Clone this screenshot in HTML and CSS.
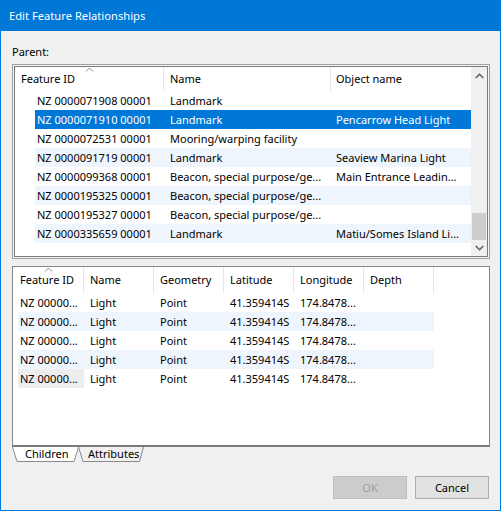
FILE: index.html
```html
<!DOCTYPE html>
<html lang="en">
<head>
  <meta charset="UTF-8">
  <title>Edit Feature Relationships</title>
  <link rel="stylesheet" href="styles.css">
</head>
<body>

  <div class="window">
    <div class="titlebar">Edit Feature Relationships</div>

    <div class="client">
      <div class="label">Parent:</div>

      <div class="parent-box">
        <div class="parent-inner">
          <div class="list">
            <div class="list-header top-cols">
              <div class="hcell">
                <svg class="sort" width="9" height="5" viewBox="0 0 9 5"><polyline points="1,4.5 4.5,1 8,4.5" fill="none" stroke="#8c8c8c" stroke-width="1"/></svg>
                Feature ID
              </div>
              <div class="hcell">Name</div>
              <div class="hcell last">Object name</div>
            </div>
            <div class="rows top-rows">
              <div class="row"><div>NZ 0000071908 00001</div><div>Landmark</div><div></div></div>
              <div class="row selected"><div>NZ 0000071910 00001</div><div>Landmark</div><div>Pencarrow Head Light</div></div>
              <div class="row"><div>NZ 0000072531 00001</div><div>Mooring/warping facility</div><div></div></div>
              <div class="row alt"><div>NZ 0000091719 00001</div><div>Landmark</div><div>Seaview Marina Light</div></div>
              <div class="row"><div>NZ 0000099368 00001</div><div>Beacon, special purpose/ge...</div><div>Main Entrance Leadin...</div></div>
              <div class="row alt"><div>NZ 0000195325 00001</div><div>Beacon, special purpose/ge...</div><div></div></div>
              <div class="row"><div>NZ 0000195327 00001</div><div>Beacon, special purpose/ge...</div><div></div></div>
              <div class="row alt"><div>NZ 0000335659 00001</div><div>Landmark</div><div>Matiu/Somes Island Li...</div></div>
            </div>
          </div>
          <div class="scrollbar">
            <div class="sb-btn">
              <svg width="9" height="6" viewBox="0 0 9 6"><polyline points="0.8,5 4.5,1.3 8.2,5" fill="none" stroke="#606060" stroke-width="1.6"/></svg>
            </div>
            <div class="sb-track"><div class="sb-thumb"></div></div>
            <div class="sb-btn">
              <svg width="9" height="6" viewBox="0 0 9 6"><polyline points="0.8,1 4.5,4.7 8.2,1" fill="none" stroke="#606060" stroke-width="1.6"/></svg>
            </div>
          </div>
        </div>
      </div>

      <div class="child-box">
        <div class="list-header bottom-cols">
          <div class="hcell">
            <svg class="sort" width="9" height="5" viewBox="0 0 9 5"><polyline points="1,4.5 4.5,1 8,4.5" fill="none" stroke="#8c8c8c" stroke-width="1"/></svg>
            Feature ID
          </div>
          <div class="hcell">Name</div>
          <div class="hcell">Geometry</div>
          <div class="hcell">Latitude</div>
          <div class="hcell">Longitude</div>
          <div class="hcell">Depth</div>
        </div>
        <div class="rows bottom-rows">
          <div class="row"><div>NZ 00000...</div><div>Light</div><div>Point</div><div>41.359414S</div><div>174.8478...</div><div></div></div>
          <div class="row alt"><div>NZ 00000...</div><div>Light</div><div>Point</div><div>41.359414S</div><div>174.8478...</div><div></div></div>
          <div class="row"><div>NZ 00000...</div><div>Light</div><div>Point</div><div>41.359414S</div><div>174.8478...</div><div></div></div>
          <div class="row alt"><div>NZ 00000...</div><div>Light</div><div>Point</div><div>41.359414S</div><div>174.8478...</div><div></div></div>
          <div class="row"><div class="focus">NZ 00000...</div><div>Light</div><div>Point</div><div>41.359414S</div><div>174.8478...</div><div></div></div>
        </div>
      </div>

      <div class="tabs">
        <div class="tab tab-children">
          <svg class="tab-shape" width="67" height="15" viewBox="0 0 67 15">
            <polygon points="0,0 67,0 62.5,14.5 4.5,14.5" fill="#ffffff"/>
            <polyline points="0.5,0 5,14.5 62,14.5 66.5,0" fill="none" stroke="#8a8a8a" stroke-width="1"/>
          </svg>
          <span>Children</span>
        </div>
        <div class="tab tab-attributes">
          <svg class="tab-shape" width="66" height="15" viewBox="0 0 66 15">
            <polygon points="0,0 66,0 62,14.5 4.5,14.5" fill="#f0f0f0"/>
            <polyline points="0.5,0 5,14.5 61.5,14.5 65.5,0" fill="none" stroke="#8a8a8a" stroke-width="1"/>
          </svg>
          <span>Attributes</span>
        </div>
      </div>

      <div class="buttons">
        <button class="btn" disabled>OK</button>
        <button class="btn">Cancel</button>
      </div>
    </div>
  </div>

</body>
</html>
```

FILE: styles.css
```css
* {
  box-sizing: border-box;
}
body {
  margin: 0;
  padding: 0;
  background: #f0f0f0;
  font-family: "Noto Sans", sans-serif;
  font-size: 11px;
  color: #000;
}
.window {
  width: 501px;
  height: 511px;
  border: 1px solid #0078d7;
  border-top: none;
  display: flex;
  flex-direction: column;
  background: #f0f0f0;
}
.titlebar {
  height: 31px;
  line-height: 31px;
  margin: 0 -1px;
  padding-left: 9px;
  background: #0078d7;
  color: white;
  font-size: 11.2px;
}
.client {
  flex: 1;
  display: flex;
  flex-direction: column;
  padding: 0 10px 11px 11px;
}
.label {
  margin-top: 13px;
  margin-bottom: 4px;
  height: 16px;
  line-height: 16px;
}

/* parent list */
.parent-box {
  height: 195px;
  border: 1px solid #a0a0a0;
  padding: 1px;
  background: #f7f7f7;
}
.parent-inner {
  height: 100%;
  border: 1px solid #7a7a7a;
  background: white;
  display: flex;
}
.list {
  flex: 1;
  min-width: 0;
  background: white;
}
.list-header {
  display: flex;
  background: white;
}
.hcell {
  position: relative;
  border-right: 1px solid #e5e5e5;
  padding-left: 6px;
  white-space: nowrap;
  overflow: hidden;
}
.hcell.last {
  flex: 1;
  border-right: none;
}
.sort {
  position: absolute;
  top: 0;
  left: 50%;
  margin-left: -4px;
}
.top-cols .hcell {
  height: 24px;
  line-height: 24px;
}
.top-cols .hcell:nth-child(1) {
  width: 149px;
}
.top-cols .hcell:nth-child(2) {
  width: 167px;
}
.top-cols .hcell:nth-child(3) {
  padding-left: 5px;
}
.rows .row {
  display: flex;
  height: 19px;
  line-height: 19px;
}
.rows .row div {
  white-space: nowrap;
  overflow: hidden;
}
.row.alt {
  background: #eff5fc;
}
.row.selected {
  background: #0078d7;
  color: white;
}
.top-rows .row {
  margin-left: 20px;
  width: 436px;
}
.top-rows .row div:nth-child(1) {
  width: 129px;
  padding-left: 2px;
}
.top-rows .row div:nth-child(2) {
  width: 167px;
  padding-left: 6px;
}
.top-rows .row div:nth-child(3) {
  width: 140px;
  padding-left: 5px;
}

.scrollbar {
  width: 16px;
  background: #f0f0f0;
  display: flex;
  flex-direction: column;
}
.sb-btn {
  height: 17px;
  display: flex;
  align-items: center;
  justify-content: center;
}
.sb-btn:last-child {
  height: 16px;
}
.sb-track {
  flex: 1;
  display: flex;
  flex-direction: column;
  justify-content: flex-end;
  padding: 0 1px;
}
.sb-thumb {
  height: 27px;
  background: #cdcdcd;
}

/* children list */
.child-box {
  margin-top: 7px;
  height: 181px;
  border: 1px solid #828790;
  border-bottom: 2px solid #7a7a7a;
  background: white;
}
.bottom-cols .hcell {
  width: 70px;
  height: 26px;
  line-height: 26px;
}
.bottom-cols .hcell:first-child {
  width: 71px;
  padding-left: 7px;
}
.bottom-rows .row {
  margin-left: 5px;
  width: 416px;
}
.bottom-rows .row div {
  width: 70px;
  padding-left: 6px;
}
.bottom-rows .row div:first-child {
  width: 66px;
  padding-left: 2px;
}
.bottom-rows .row div.focus {
  background: #ededed;
}

/* tabs */
.tabs {
  display: flex;
  height: 16px;
}
.tab {
  position: relative;
  height: 15px;
  line-height: 14px;
}
.tab-shape {
  position: absolute;
  top: 0;
  left: 0;
}
.tab span {
  position: relative;
}
.tab-children {
  width: 67px;
  padding-left: 13px;
}
.tab-attributes {
  width: 66px;
  margin-left: -1px;
  padding-left: 10px;
}

/* buttons */
.buttons {
  margin-top: auto;
  display: flex;
  justify-content: flex-end;
  gap: 8px;
  padding-right: 1px;
}
.btn {
  width: 74px;
  height: 23px;
  background: #e1e1e1;
  border: 1px solid #adadad;
  font-family: "Noto Sans", sans-serif;
  font-size: 11px;
  color: #000;
  padding: 0;
}
.btn:disabled {
  background: #cccccc;
  border-color: #bfbfbf;
  color: #a0a0a0;
}
```
